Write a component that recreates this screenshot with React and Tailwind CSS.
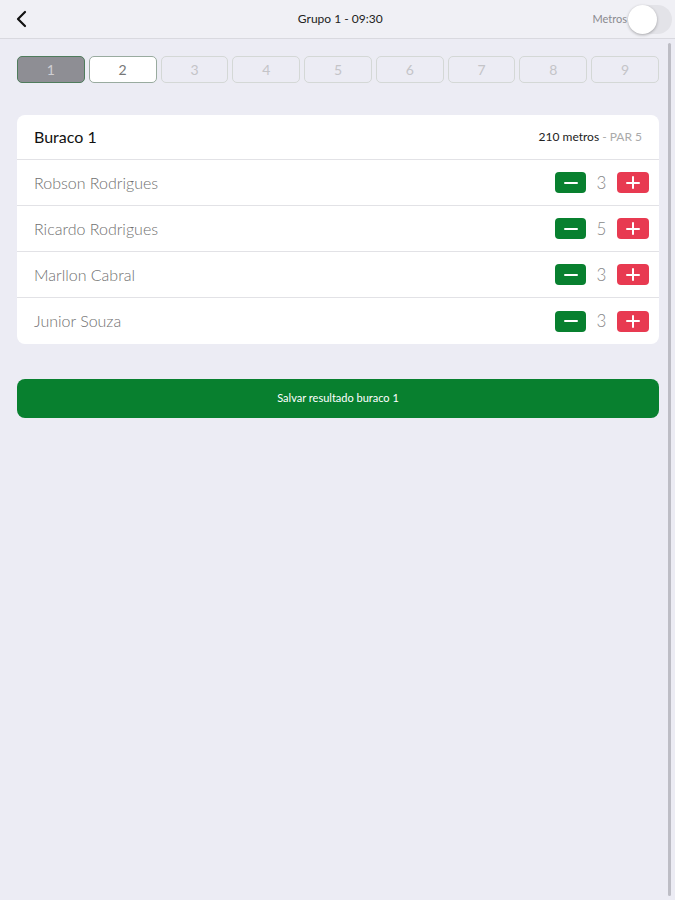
import React from "react";

const players = [
  { name: "Robson Rodrigues", score: 3 },
  { name: "Ricardo Rodrigues", score: 5 },
  { name: "Marllon Cabral", score: 3 },
  { name: "Junior Souza", score: 3 },
];

function Minus() {
  return (
    <button className="w-[31px] h-[21px] rounded-[4px] bg-[#08802f] flex items-center justify-center">
      <span className="block w-[14px] h-[2px] bg-white rounded" />
    </button>
  );
}

function Plus() {
  return (
    <button className="w-[32px] h-[21px] rounded-[4px] bg-[#e83a51] flex items-center justify-center relative">
      <span className="block w-[14px] h-[2px] bg-white rounded" />
      <span className="absolute w-[2px] h-[13px] bg-white rounded" />
    </button>
  );
}

export default function App() {
  const tabs = [1, 2, 3, 4, 5, 6, 7, 8, 9];
  return (
    <div className="w-[675px] h-[900px] bg-[#ececf4] flex flex-col overflow-hidden" style={{ fontFamily: "Lato, 'Liberation Sans', sans-serif" }}>
      <div className="h-[39px] bg-[#f0f0f5] border-b border-[#d9d9df] flex items-center relative shrink-0">
        <div className="pl-[15px] w-[60px]">
          <svg width="14" height="18" viewBox="0 0 14 18">
            <path d="M10 2 L3 9 L10 16" fill="none" stroke="#111" strokeWidth="2.2" strokeLinecap="round" strokeLinejoin="round" />
          </svg>
        </div>
        <div className="flex-1 text-center text-[12px] text-[#222] pl-[28px]">Grupo 1 - 09:30</div>
        <div className="flex items-center pr-[3px]">
          <span className="text-[11px] text-[#8a8a8f] mr-[1px]">Metros</span>
          <div className="w-[44px] h-[29px] rounded-full bg-[#e3e3e8] relative">
            <div className="absolute left-0 top-0 w-[29px] h-[29px] rounded-full bg-white shadow-[0_1px_3px_rgba(0,0,0,0.3)]" />
          </div>
        </div>
      </div>

      <div className="flex-1 flex relative">
        <div className="flex-1 flex flex-col px-[17px] pr-[16px]">
          <div className="flex gap-[4px] mt-[17px]">
            {tabs.map((t) => {
              let cls = "border-[#d4d8d6] text-[#c4c4c8] bg-transparent";
              if (t === 1) cls = "bg-[#8e8e94] border-[#4f7c5c] text-[#cfcfd3]";
              if (t === 2) cls = "bg-white border-[#99ab9f] text-[#777]";
              return (
                <div key={t} className={`flex-1 h-[27px] rounded-[5px] border flex items-center justify-center text-[14px] ${cls}`}>
                  {t}
                </div>
              );
            })}
          </div>

          <div className="mt-[32px] bg-white rounded-[8px] overflow-hidden">
            <div className="h-[45px] flex items-center justify-between px-[17px] border-b border-[#e2e2e6]">
              <span className="text-[16px] text-[#111] font-normal">Buraco 1</span>
              <span className="text-[12px] text-[#222] font-normal">
                210 metros <span className="text-[#aaa]">- PAR 5</span>
              </span>
            </div>
            {players.map((p, i) => (
              <div key={p.name} className={`h-[46px] flex items-center justify-between pl-[17px] pr-[10px] ${i < players.length - 1 ? "border-b border-[#e2e2e6]" : ""}`}>
                <span className="text-[16px] text-[#707070] font-light">{p.name}</span>
                <div className="flex items-center">
                  <Minus />
                  <span className="w-[31px] text-center text-[17px] text-[#888] font-light">{p.score}</span>
                  <Plus />
                </div>
              </div>
            ))}
          </div>

          <button className="mt-[35px] h-[39px] rounded-[8px] bg-[#08802f] text-white text-[11px] flex items-center justify-center">
            Salvar resultado buraco 1
          </button>
        </div>
        <div className="absolute right-[4px] top-[4px] bottom-[4px] w-[3px] bg-[#bdbdc5] rounded" />
      </div>
    </div>
  );
}
